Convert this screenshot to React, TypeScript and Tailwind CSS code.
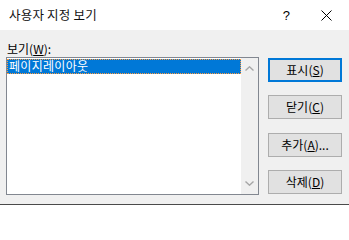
import React from "react"

type Btn = { label: string; key: string; tail?: string; primary?: boolean }

const BUTTONS: Btn[] = [
  { label: "표시", key: "S", primary: true },
  { label: "닫기", key: "C" },
  { label: "추가", key: "A", tail: "..." },
  { label: "삭제", key: "D" },
]

function Chevron({ up }: { up?: boolean }) {
  return (
    <svg width="9" height="5" viewBox="0 0 9 5" className="block">
      <path
        d={up ? "M0.5 4.5 L4.5 0.8 L8.5 4.5" : "M0.5 0.5 L4.5 4.2 L8.5 0.5"}
        fill="none"
        stroke="#a6a6a6"
        strokeWidth="1.4"
      />
    </svg>
  )
}

export default function App() {
  return (
    <div className="flex h-[205px] w-[349px] flex-col overflow-hidden bg-[#f0f0f0] font-['Noto_Sans_CJK_KR','Noto_Sans',sans-serif] text-[12px] leading-none text-black">
      {/* title bar */}
      <div className="flex h-[30px] shrink-0 items-center bg-white pl-[9px]">
        <span className="text-[12.5px] tracking-[0.2px] text-[#111]">사용자 지정 보기</span>
        <span className="ml-auto mr-[31px] font-['Liberation_Sans',sans-serif] text-[13px]">?</span>
        <svg width="11" height="11" viewBox="0 0 11 11" className="mr-[17px]">
          <path d="M0.5 0.5 L10.5 10.5 M10.5 0.5 L0.5 10.5" stroke="#000" strokeWidth="1" />
        </svg>
      </div>

      <div className="flex h-[174px] shrink-0 pl-[6px] pt-[11px]">
        <div className="flex w-[253px] flex-col">
          <div className="h-[16px] pl-[1px] leading-[16px]">
            보기(<span className="underline">W</span>):
          </div>
          <div className="flex h-[138px] border border-[#828790] bg-white">
            <div className="flex-1 pt-px">
              <div className="h-[15px] bg-[#0078d7] pl-[2px] leading-[13px] tracking-[0.3px] text-white outline-1 -outline-offset-1 outline-dotted outline-[#ff9a3c]">
                페이지레이아웃
              </div>
            </div>
            <div className="flex w-[17px] flex-col items-center justify-between bg-[#f0f0f0] py-[8px]">
              <Chevron up />
              <Chevron />
            </div>
          </div>
        </div>

        <div className="ml-[9px] flex w-[74px] flex-col gap-[13.4px] pt-[17px]">
          {BUTTONS.map((b) => (
            <div
              key={b.key}
              className={
                b.primary
                  ? "flex h-[24px] items-center justify-center border-2 border-[#0078d7] bg-[#e1e1e1]"
                  : "flex h-[24px] items-center justify-center border border-[#adadad] bg-[#e1e1e1]"
              }
            >
              {b.label}(<span className="underline">{b.key}</span>){b.tail}
            </div>
          ))}
        </div>
      </div>

      <div className="h-px shrink-0 bg-[#4a4a4a]" />
    </div>
  )
}
